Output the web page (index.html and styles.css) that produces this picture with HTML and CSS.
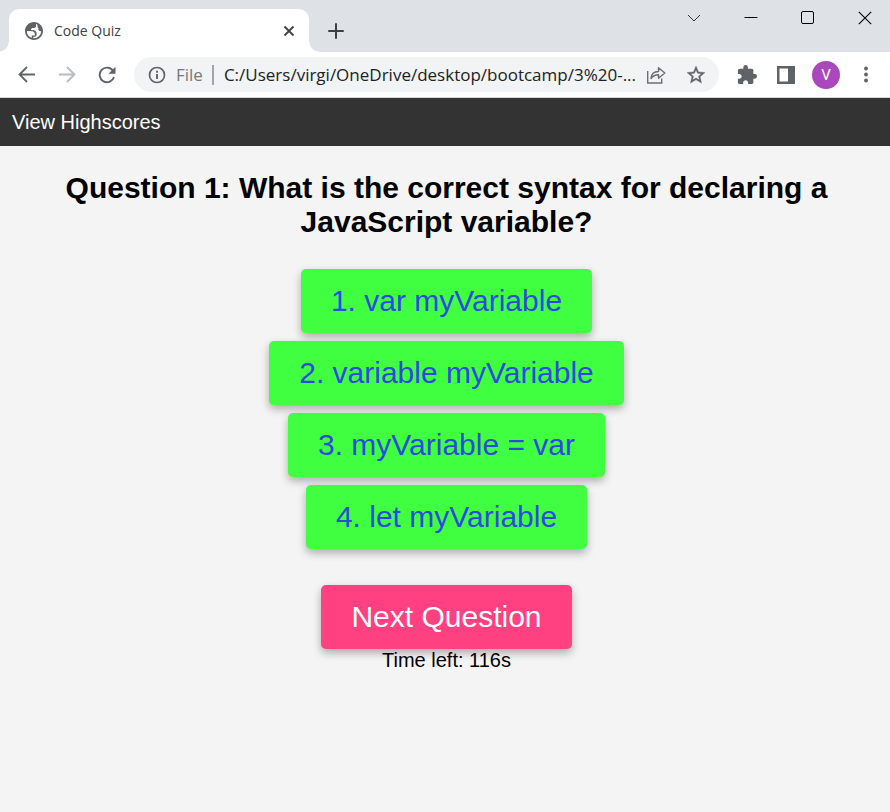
FILE: index.html
```html
<!DOCTYPE html>
<html lang="en">
<head>
<meta charset="utf-8">
<title>Code Quiz</title>
<link rel="stylesheet" href="styles.css">
</head>
<body>
<div class="tabstrip">
  <div class="tab">
    <svg class="globe" width="18" height="18" viewBox="2 2 20 20" aria-hidden="true"><path fill="#5f6368" d="M12 2C6.480 2 2 6.480 2 12s4.480 10 10 10 10-4.480 10-10S17.520 2 12 2zM4 12h4.400c3.407.022 4.922 1.730 4.543 5.127H9.488v2.470A8.004 8.004 0 0 1 4 12zm16 0a8 8 0 0 1-8.700 7.970v-1.200c2.400-.3 3.700-1.500 3.700-3.500 0-2.800-1.700-4.200-5-4.300H8.600c.2-1.500 1-2.200 2.500-2.200 2 0 3.200-.8 3.200-2.300V4.350A8 8 0 0 1 20 12z" fill-rule="evenodd"/><path fill="#5f6368" d="M16 6.500c-.3 1.200.2 2 1.200 2.500-.8.900-.6 1.900.5 2.700l2.800.8C21 8 18.500 5 15.500 3.700z"/></svg>
    <span class="tab-title">Code Quiz</span>
    <button class="tab-close" aria-label="Close tab"><svg width="12" height="12" viewBox="0 0 12 12"><path d="M1.500 1.500l9 9M10.500 1.500l-9 9" stroke="#3c4043" stroke-width="1.800" fill="none"/></svg></button>
  </div>
  <button class="new-tab" aria-label="New tab"><svg width="16" height="16" viewBox="0 0 16 16"><path d="M8 1v14M1 8h14" stroke="#3c4043" stroke-width="2" stroke-linecap="round"/></svg></button>
  <div class="window-controls">
    <button aria-label="Search tabs"><svg width="14" height="14" viewBox="0 0 14 14"><path d="M1 4l6 6 6-6" stroke="#333" fill="none"/></svg></button>
    <button aria-label="Minimize"><svg width="14" height="14" viewBox="0 0 14 14"><path d="M.5 6.500h13" stroke="#000"/></svg></button>
    <button aria-label="Maximize"><svg width="14" height="14" viewBox="0 0 14 14"><rect x=".5" y=".5" width="12" height="12" rx="1.500" stroke="#000" fill="none"/></svg></button>
    <button aria-label="Close"><svg width="14" height="14" viewBox="0 0 14 14"><path d="M.8.800l12.400 12.400M13.200.800L.8 13.200" stroke="#000" stroke-width="1.100"/></svg></button>
  </div>
</div>
<div class="toolbar">
  <div class="history">
    <button aria-label="Back"><svg width="18" height="18" viewBox="0 0 18 18"><path d="M17 8.500H2M9 1L1.500 8.500 9 16" stroke="#5f6368" stroke-width="1.800" fill="none"/></svg></button>
    <button aria-label="Forward" disabled><svg width="18" height="18" viewBox="0 0 18 18"><path d="M1 8.500h15M9 1L16.500 8.500 9 16" stroke="#babcbe" stroke-width="1.800" fill="none"/></svg></button>
    <button aria-label="Reload"><svg width="18" height="18" viewBox="0 0 18 18"><path d="M14.800 4.500A7.300 7.300 0 1 0 16 11" stroke="#5f6368" stroke-width="1.900" fill="none"/><path d="M17.500.800v7h-7z" fill="#5f6368"/></svg></button>
  </div>
  <div class="omnibox">
    <svg class="info" width="18" height="18" viewBox="0 0 18 18" aria-hidden="true"><circle cx="9" cy="9" r="7.500" stroke="#5f6368" stroke-width="1.700" fill="none"/><path d="M9 8v5M9 4.800v1.900" stroke="#5f6368" stroke-width="1.900"/></svg>
    <span class="scheme">File</span>
    <input class="url" aria-label="Address" value="C:/Users/virgi/OneDrive/desktop/bootcamp/3%20-...">
    <button class="share" aria-label="Share"><svg width="20" height="20" viewBox="0 0 20 20"><path d="M1.700 6v12h14v-4.500" stroke="#6b6f73" stroke-width="1.400" fill="none"/><path d="M5 13.500c.3-4.500 2.800-7 7.500-7V2.700L18.800 8l-6.300 5.300V9.700c-3.600 0-5.600 1.100-7.500 3.800z" stroke="#6b6f73" stroke-width="1.400" fill="none" stroke-linejoin="round"/></svg></button>
    <button class="star" aria-label="Bookmark"><svg width="18" height="18" viewBox="2 2 20 20"><path fill="#5f6368" stroke="#5f6368" stroke-width=".4" d="M22 9.240l-7.190-.62L12 2 9.190 8.630 2 9.240l5.460 4.730L5.820 21 12 17.270 18.180 21l-1.630-7.030L22 9.240zM12 15.400l-3.760 2.270 1-4.280-3.320-2.880 4.380-.38L12 6.100l1.710 4.040 4.380.38-3.320 2.880 1 4.280L12 15.400z"/></svg></button>
  </div>
  <div class="actions">
    <button aria-label="Extensions"><svg width="20" height="20" viewBox="1 1 22 22"><path fill="#5f6368" d="M20.500 11H19V7c0-1.100-.9-2-2-2h-4V3.500a2.500 2.500 0 0 0-5 0V5H4c-1.100 0-1.990.9-1.990 2v3.800H3.500c1.490 0 2.700 1.210 2.700 2.700s-1.210 2.700-2.700 2.700H2V20c0 1.100.9 2 2 2h3.800v-1.500c0-1.490 1.210-2.700 2.700-2.700s2.700 1.210 2.700 2.700V22H17c1.100 0 2-.9 2-2v-4h1.500a2.500 2.500 0 0 0 0-5z"/></svg></button>
    <button aria-label="Side panel"><svg width="18" height="18" viewBox="0 0 18 18"><path fill="#5f6368" fill-rule="evenodd" d="M0 0h18v18H0zM2.500 2.500v13H11v-13z"/></svg></button>
    <button class="avatar" aria-label="Profile V">V</button>
    <button aria-label="Menu"><svg width="18" height="18" viewBox="0 0 18 18" fill="#5f6368"><circle cx="9" cy="2.500" r="1.900"/><circle cx="9" cy="8.500" r="1.900"/><circle cx="9" cy="14.500" r="1.900"/></svg></button>
  </div>
</div>
<nav class="site-nav"><a href="#highscores">View Highscores</a></nav>
<main class="quiz">
  <h1>Question 1: What is the correct syntax for declaring a JavaScript variable?</h1>
  <div class="choices">
    <button class="choice">1. var myVariable</button>
    <button class="choice">2. variable myVariable</button>
    <button class="choice">3. myVariable = var</button>
    <button class="choice">4. let myVariable</button>
  </div>
  <button class="choice next">Next Question</button>
  <p class="timer">Time left: 116s</p>
</main>
</body>
</html>
```
FILE: styles.css
```css
* { box-sizing: border-box; }
body {
  margin: 0;
  min-height: 100vh;
  background: #f4f4f4;
  font-family: "Liberation Sans", Arial, sans-serif;
}
button { border: 0; padding: 0; background: none; font: inherit; }
svg { display: block; }

.tabstrip {
  display: flex;
  height: 52px;
  padding: 9px 0 0 9px;
  background: #dee1e6;
  font-family: "Open Sans", sans-serif;
}
.tab {
  position: relative;
  display: flex;
  align-items: center;
  width: 300px;
  padding: 0 14px 0 16px;
  border-radius: 10px 10px 0 0;
  background: #fff;
}
.tab::before, .tab::after {
  content: "";
  position: absolute;
  bottom: 0;
  width: 10px;
  height: 10px;
}
.tab::before { right: 100%; background: radial-gradient(circle at 0 0, transparent 9px, #fff 10px); }
.tab::after { left: 100%; background: radial-gradient(circle at 100% 0, transparent 9px, #fff 10px); }
.tab-title { flex: 1; margin-left: 11px; font-size: 14px; color: #3c4043; }
.new-tab { margin-left: 19px; }
.window-controls {
  display: flex;
  align-items: center;
  gap: 43px;
  height: 18px;
  margin-left: auto;
  padding-right: 18px;
}

.toolbar {
  display: flex;
  align-items: center;
  height: 46px;
  padding: 0 15px 0 18px;
  border-bottom: 1px solid #d5d7da;
  background: #fff;
  font-family: "Open Sans", sans-serif;
}
.history { display: flex; gap: 22px; }
.omnibox {
  display: flex;
  flex: 1;
  align-items: center;
  height: 35px;
  margin: 0 18px;
  padding: 0 14px;
  border-radius: 18px;
  background: #f1f3f4;
  font-size: 17px;
}
.scheme {
  margin-left: 10px;
  padding-right: 9px;
  border-right: 2px solid #a0a3a7;
  line-height: 20px;
  color: #74787c;
}
.url {
  flex: 1;
  min-width: 0;
  margin: 0 10px;
  padding: 0;
  border: 0;
  background: none;
  font: inherit;
  color: #202124;
}
.star { margin-left: 21px; }
.actions { display: flex; align-items: center; gap: 20px; }
.avatar {
  width: 28px;
  height: 28px;
  margin: 0 1px 0 -3px;
  border-radius: 50%;
  background: #ab47bc;
  font-family: Roboto, sans-serif;
  font-size: 15px;
  color: #fff;
}
.actions button:last-child { margin-left: -4px; }

.site-nav {
  padding: 12px;
  background: #333;
  font-size: 20px;
  line-height: 24px;
}
.site-nav a { color: #fff; text-decoration: none; }

.quiz {
  display: flex;
  flex-direction: column;
  align-items: center;
  padding: 25px 47px 24px 50px;
}
h1 { margin: 0; font-size: 30px; line-height: 34px; text-align: center; }
.choices {
  display: flex;
  flex-direction: column;
  align-items: center;
  gap: 8px;
  margin: 30px 0 36px;
}
.choice {
  padding: 15px 30px;
  border-radius: 5px;
  background: #40ff40;
  box-shadow: 0 4px 8px rgba(0, 0, 0, .3);
  font-size: 30px;
  line-height: 34px;
  color: #2a4be0;
}
.next { background: #ff4081; color: #fff; }
.timer { margin: 0; font-size: 20px; line-height: 22px; }
```
